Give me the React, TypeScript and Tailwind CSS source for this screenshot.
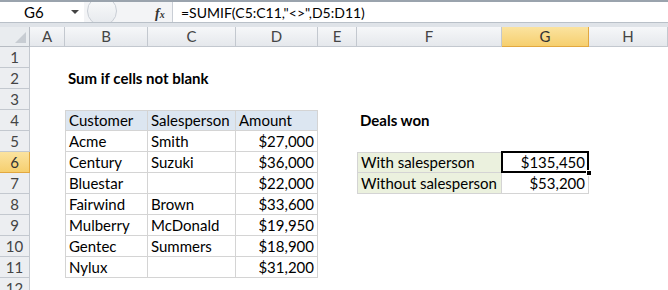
const font = { fontFamily: "Lato, 'Liberation Sans', sans-serif" }

const cols = ["A", "B", "C", "D", "E", "F", "G", "H"]

type Row = { n: number; cells: React.ReactNode[] }

const tb = "border-r border-b border-[#d4d4d4]"
const tl = "border-l border-[#d4d4d4]"

function C({ className = "", children }: { className?: string; children?: React.ReactNode }) {
    return <div className={"h-[21px] flex items-center px-[3px] whitespace-nowrap " + className}>{children}</div>
}

const data: [string, string, string][] = [
    ["Acme", "Smith", "$27,000"],
    ["Century", "Suzuki", "$36,000"],
    ["Bluestar", "", "$22,000"],
    ["Fairwind", "Brown", "$33,600"],
    ["Mulberry", "McDonald", "$19,950"],
    ["Gentec", "Summers", "$18,900"],
    ["Nylux", "", "$31,200"],
]

function rowCells(n: number): React.ReactNode[] {
    const empty = () => <C />
    const out: React.ReactNode[] = [empty(), empty(), empty(), empty(), empty(), empty(), empty(), empty()]
    if (n === 2) out[1] = <C className="font-bold overflow-visible">Sum if cells not blank</C>
    if (n === 4) {
        out[1] = <C className={"bg-[#dce6f1] border-t border-[#d4d4d4] " + tb + " " + tl}>Customer</C>
        out[2] = <C className={"bg-[#dce6f1] border-t border-[#d4d4d4] " + tb}>Salesperson</C>
        out[3] = <C className={"bg-[#dce6f1] border-t border-[#d4d4d4] " + tb}>Amount</C>
        out[5] = <C className="font-bold">Deals won</C>
    }
    if (n >= 5 && n <= 11) {
        const d = data[n - 5]
        out[1] = <C className={tb + " " + tl}>{d[0]}</C>
        out[2] = <C className={tb}>{d[1]}</C>
        out[3] = <C className={tb + " justify-end"}>{d[2]}</C>
    }
    if (n === 6) {
        out[5] = <C className="bg-[#ebf1de] border border-[#d4d4d4]">With salesperson</C>
        out[6] = (
            <div className="relative h-[21px]">
                <div className="absolute -left-px -top-px right-0 bottom-0 border-2 border-black flex items-center justify-end px-[2px]">
                    $135,450
                </div>
                <div className="absolute -right-[3px] -bottom-[3px] w-[6px] h-[6px] bg-black border border-white" />
            </div>
        )
    }
    if (n === 7) {
        out[5] = <C className="bg-[#ebf1de] border-x border-b border-[#d4d4d4]">Without salesperson</C>
        out[6] = <C className="justify-end border-r border-b border-[#d4d4d4]">$53,200</C>
    }
    return out
}

export default function App() {
    const rows: Row[] = Array.from({ length: 12 }, (_, i) => ({ n: i + 1, cells: rowCells(i + 1) }))
    return (
        <div className="w-[668px] h-[290px] overflow-hidden bg-white text-[15px] text-black" style={font}>
            {/* formula bar */}
            <div className="h-[22px] flex border-t-2 border-[#9aa3ad] bg-[#f3f4f6]">
                <div className="w-[84px] bg-white flex items-center pl-[24px] text-[15px] relative">
                    G6
                    <span className="absolute left-[71px] top-[8px] w-0 h-0 border-x-[4px] border-x-transparent border-t-[4px] border-t-[#444]" />
                </div>
                <div className="w-[88px] relative flex items-center overflow-hidden">
                    <div className="absolute left-[3px] top-[-6px] w-[30px] h-[30px] rounded-full border border-[#c9ced5] bg-gradient-to-b from-[#fafbfc] to-[#e6e9ed]" />
                    <span className="absolute left-[71px] top-[1px] italic font-bold text-[14px] text-[#333]" style={{ fontFamily: "'Liberation Serif', serif" }}>
                        f<span className="text-[10px]">x</span>
                    </span>
                </div>
                <div className="flex-1 bg-white border-l border-[#c9ced5] flex items-center pl-[8px] text-[14px]">
                    =SUMIF(C5:C11,"&lt;&gt;",D5:D11)
                </div>
            </div>
            <div className="h-[5px] bg-[#dfe3e8] border-t border-[#b9c0c8]" />
            {/* sheet */}
            <div className="grid grid-cols-[30px_35px_83px_88px_82px_39px_145px_87px_1fr]">
                <div className="h-[20px] bg-[#e9ecef] border-r border-b border-[#b7bcc3] relative">
                    <span className="absolute right-[3px] bottom-[3px] w-0 h-0 border-l-[11px] border-l-transparent border-b-[11px] border-b-[#c7ccd2]" />
                </div>
                {cols.map((c) => (
                    <div
                        key={c}
                        className={
                            "h-[20px] flex items-center justify-center border-r border-b text-[15px] " +
                            (c === "G"
                                ? "bg-gradient-to-b from-[#fbe39f] to-[#f6cf6e] border-[#e2a840] text-[#333]"
                                : "bg-gradient-to-b from-[#f6f7f9] to-[#e5e8ec] border-[#c3c8cf] text-[#444]")
                        }
                    >
                        {c}
                    </div>
                ))}
                {rows.map((r) => (
                    <div key={r.n} className="contents">
                        <div
                            className={
                                "h-[21px] flex items-center justify-center border-r border-b text-[15px] " +
                                (r.n === 6
                                    ? "bg-gradient-to-b from-[#fbe39f] to-[#f6cf6e] border-[#e2a840] text-[#333]"
                                    : "bg-[#eceef1] border-[#c3c8cf] text-[#444]")
                            }
                        >
                            {r.n}
                        </div>
                        {r.cells.map((c, i) => (
                            <div key={i} className={i === 1 && r.n === 2 ? "overflow-visible" : "min-w-0"}>
                                {c}
                            </div>
                        ))}
                    </div>
                ))}
            </div>
        </div>
    )
}
